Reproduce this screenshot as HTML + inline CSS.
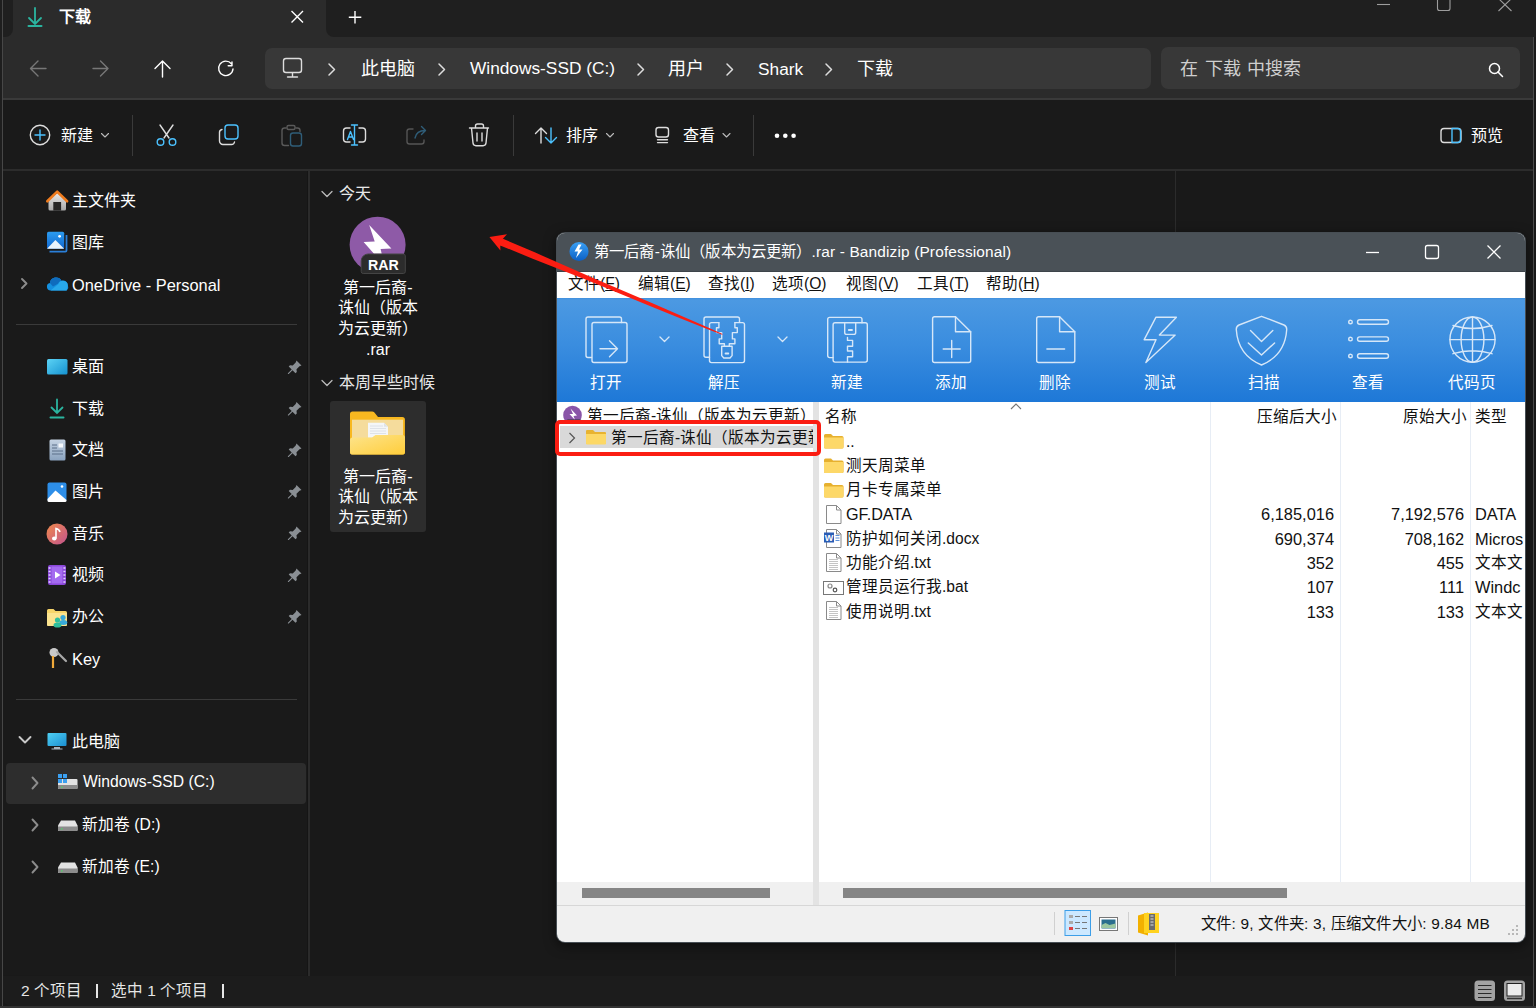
<!DOCTYPE html>
<html lang="zh-CN"><head><meta charset="utf-8">
<style>
*{box-sizing:border-box;margin:0;padding:0}
html,body{width:1536px;height:1008px;overflow:hidden;background:#191919;font-family:"Liberation Sans",sans-serif;color:#fff}
.a{position:absolute}
.t{position:absolute;white-space:nowrap;line-height:1}
svg{position:absolute;overflow:visible}
</style></head><body>
<!-- ===== EXPLORER ===== -->
<div class="a" style="left:0;top:0;width:2px;height:1008px;background:#1e1e1e"></div><div class="a" style="left:2px;top:0;width:1px;height:1008px;background:#474747"></div>
<div class="a" style="left:3px;top:0;width:1533px;height:37px;background:#1f1f1f"></div>

<!-- active tab -->
<div class="a" style="left:13px;top:-8px;width:313px;height:45px;background:#2b2b2b;border-radius:8px 8px 0 0"></div>
<div class="a" style="left:5px;top:29px;width:8px;height:8px;background:#2b2b2b"></div>
<div class="a" style="left:5px;top:29px;width:8px;height:8px;background:#1f1f1f;border-radius:0 0 8px 0"></div>
<div class="a" style="left:326px;top:29px;width:8px;height:8px;background:#2b2b2b"></div>
<div class="a" style="left:326px;top:29px;width:8px;height:8px;background:#1f1f1f;border-radius:0 0 0 8px"></div>
<!-- nav row -->
<div class="a" style="left:3px;top:37px;width:1530px;height:61px;background:#2b2b2b"></div>
<div class="a" style="left:3px;top:98px;width:1530px;height:2px;background:#3a3a3a"></div>
<div class="a" style="left:265px;top:48px;width:886px;height:41px;background:#383838;border-radius:7px"></div>
<div class="a" style="left:1161px;top:47px;width:359px;height:42px;background:#383838;border-radius:7px"></div>
<!-- command bar -->
<div class="a" style="left:3px;top:100px;width:1530px;height:69px;background:#1a1a1a"></div>
<div class="a" style="left:3px;top:169px;width:1530px;height:2px;background:#2c2c2c"></div>
<div class="a" style="left:132px;top:115px;width:1px;height:41px;background:#3a3a3a"></div>
<div class="a" style="left:513px;top:115px;width:1px;height:41px;background:#3a3a3a"></div>
<div class="a" style="left:753px;top:115px;width:1px;height:41px;background:#3a3a3a"></div>
<!-- panes -->
<div class="a" style="left:3px;top:171px;width:306px;height:804px;background:#1a1a1a"></div>
<div class="a" style="left:307px;top:171px;width:1px;height:805px;background:#151515"></div><div class="a" style="left:308px;top:171px;width:2px;height:805px;background:#2b2b2b"></div>
<div class="a" style="left:1175px;top:171px;width:1px;height:805px;background:#2b2b2b"></div>
<div class="a" style="left:3px;top:976px;width:1530px;height:30px;background:#1c1c1c;border-radius:0 0 0 8px"></div>
<div class="a" style="left:0;top:1006px;width:1536px;height:2px;background:#333"></div>

<!-- tab contents -->
<svg style="left:0;top:0" width="60" height="40"><g stroke="#2bb5a0" stroke-width="1.8" fill="none" stroke-linecap="round"><path d="M35 8v16M29 18l6 6 6-6"/><path d="M28.5 26h13" stroke-width="2"/></g></svg>
<div class="t" style="left:59px;top:9px;font-size:16px;font-weight:bold;color:#fff">下载</div>
<svg style="left:0;top:0" width="400" height="40"><g stroke="#fff" stroke-width="1.4" fill="none"><path d="M291.5 11l11.5 11.5M303 11l-11.5 11.5"/><path d="M355 11v12.5M348.8 17.2h12.5"/></g></svg>
<!-- window controls (cut) -->
<svg style="left:0;top:0" width="1536" height="20"><g stroke="#9d9d9d" stroke-width="1.1" fill="none"><path d="M1377 4.5h13"/><rect x="1437.5" y="-3" width="12.5" height="13.5" rx="2"/><path d="M1498.5 -1.5l13 12.5M1511.5 -1.5l-13 12.5"/></g></svg>

<!-- nav buttons -->
<svg style="left:0;top:0" width="260" height="100"><g fill="none" stroke-linecap="round" stroke-linejoin="round">
<path d="M46 68.5H31M38 61l-7.5 7.5L38 76" stroke="#777" stroke-width="1.4"/>
<path d="M93 68.5h15M100.5 61l7.5 7.5-7.5 7.5" stroke="#777" stroke-width="1.4"/>
<path d="M162.5 77V61M155 68.5l7.5-7.5 7.5 7.5" stroke="#fff" stroke-width="1.4"/>
<path d="M233 69a7.2 7.2 0 1 1-1.6-5.2M232 62v3.7h-3.8" stroke="#fff" stroke-width="1.4"/>
</g></svg>
<!-- address bar -->
<svg style="left:0;top:0" width="350" height="100"><g fill="none" stroke="#ddd" stroke-width="1.4" stroke-linecap="round" stroke-linejoin="round">
<rect x="283.5" y="58.5" width="18" height="14" rx="2.5"/><path d="M292.5 73v3M287.5 77h10"/>
</g></svg>
<svg style="left:0;top:0" width="900" height="100"><g fill="none" stroke="#ddd" stroke-width="1.5" stroke-linecap="round" stroke-linejoin="round">
<path d="M329 64l5.5 5.5-5.5 5.5"/><path d="M439 64l5.5 5.5-5.5 5.5"/><path d="M638 64l5.5 5.5-5.5 5.5"/><path d="M727 64l5.5 5.5-5.5 5.5"/><path d="M826 64l5.5 5.5-5.5 5.5"/>
</g></svg>
<div class="t" style="left:361px;top:60px;font-size:18px;color:#fff">此电脑</div>
<div class="t" style="left:470px;top:60px;font-size:17.3px;color:#fff">Windows-SSD (C:)</div>
<div class="t" style="left:668px;top:60px;font-size:18px;color:#fff">用户</div>
<div class="t" style="left:758px;top:61px;font-size:17.3px;color:#fff">Shark</div>
<div class="t" style="left:857px;top:60px;font-size:18px;color:#fff">下载</div>
<div class="t" style="left:1180px;top:60px;font-size:18px;word-spacing:1.5px;color:#cfcfcf">在 下载 中搜索</div>
<svg style="left:0;top:0" width="1536" height="100"><g fill="none" stroke="#fff" stroke-width="1.5" stroke-linecap="round"><circle cx="1494.5" cy="68.5" r="5"/><path d="M1498 72l4.5 4.5"/></g></svg>

<!-- command bar contents -->
<svg style="left:0;top:0" width="1536" height="170"><g fill="none" stroke-width="1.4" stroke-linecap="round" stroke-linejoin="round">
<circle cx="40" cy="135" r="9.7" stroke="#ddd"/><path d="M40 130v10M35 135h10" stroke="#4cc2ff"/>
<path d="M101.5 133.5l3.5 3.5 3.5-3.5" stroke="#bbb" stroke-width="1.1"/>
<!-- scissors -->
<path d="M160 125l9 13M173 125l-9 13" stroke="#ddd"/><circle cx="160.5" cy="142" r="3.3" stroke="#4cc2ff"/><circle cx="172.5" cy="142" r="3.3" stroke="#4cc2ff"/>
<!-- copy -->
<rect x="225" y="125" width="13" height="14" rx="3" stroke="#4cc2ff"/><path d="M222 129.5a3 3 0 0 0-2.5 3v8.5a3.5 3.5 0 0 0 3.5 3.5h8.5a3 3 0 0 0 3-2.5" stroke="#ddd"/>
<!-- paste (disabled) -->
<path d="M286 128h-1.5a2.5 2.5 0 0 0-2.5 2.5v12.5a2.5 2.5 0 0 0 2.5 2.5h4M296 128h1.5a2.5 2.5 0 0 1 2.5 2.5v1" stroke="#5a5a5a"/><rect x="287" y="125.5" width="8" height="4" rx="1.5" stroke="#5a5a5a"/><rect x="290.5" y="133" width="11" height="13" rx="2.5" stroke="#2f5d78"/>
<!-- rename -->
<path d="M350 128h-3.5a3 3 0 0 0-3 3v8a3 3 0 0 0 3 3h3.5M359 128h3.5a3 3 0 0 1 3 3v8a3 3 0 0 1-3 3H359" stroke="#ddd"/><path d="M354.5 125v20M351.5 125h6M351.5 145h6M347.5 139.5l3-8 3 8M348.5 137h4" stroke="#4cc2ff"/>
<!-- share disabled -->
<path d="M413 129h-3.5a2.5 2.5 0 0 0-2.5 2.5v10a2.5 2.5 0 0 0 2.5 2.5h12a2.5 2.5 0 0 0 2.5-2.5V140" stroke="#555"/><path d="M415 138c1-5 5-7.5 10-7.5M421.5 126.5l4 4-4 4" stroke="#2f5d78"/>
<!-- delete -->
<path d="M469.5 128h19M475.5 128v-2a2 2 0 0 1 2-2h4a2 2 0 0 1 2 2v2M471.5 128l1.5 15a3 3 0 0 0 3 2.7h7a3 3 0 0 0 3-2.7l1.5-15M477 133v8M482 133v8" stroke="#ddd"/>
<!-- sort -->
<path d="M541 143v-15M535.5 133.5l5.5-5.5 5.5 5.5" stroke="#ddd"/><path d="M551 128v15M545.5 137.5l5.5 5.5 5.5-5.5" stroke="#4cc2ff"/>
<path d="M606.5 133.5l3.5 3.5 3.5-3.5" stroke="#bbb" stroke-width="1.1"/>
<!-- view -->
<rect x="656" y="127.5" width="12.5" height="9.5" rx="2.5" stroke="#ddd"/><path d="M657.5 139.8h10M657.5 142.6h10" stroke="#ddd"/>
<path d="M723 133.5l3.5 3.5 3.5-3.5" stroke="#bbb" stroke-width="1.1"/>
<!-- preview -->
<rect x="1441" y="128.5" width="20" height="14" rx="3" stroke="#ddd"/><path d="M1452 128.5h5.5a3 3 0 0 1 3 3v8a3 3 0 0 1-3 3H1452z" stroke="#4cc2ff"/>
</g><g fill="#fff"><circle cx="777" cy="135.8" r="2.3"/><circle cx="785.3" cy="135.8" r="2.3"/><circle cx="793.6" cy="135.8" r="2.3"/></g></svg>
<div class="t" style="left:61px;top:128px;font-size:16px;color:#fff">新建</div>
<div class="t" style="left:566px;top:128px;font-size:16px;color:#fff">排序</div>
<div class="t" style="left:683px;top:128px;font-size:16px;color:#fff">查看</div>
<div class="t" style="left:1471px;top:128px;font-size:16px;color:#fff">预览</div>

<!-- ===== NAV PANE ===== -->
<!-- home -->
<svg style="left:46px;top:190px" width="24" height="24" viewBox="0 0 24 24">
<defs><linearGradient id="hg" x1="0" y1="0" x2="0" y2="1"><stop offset="0" stop-color="#e8e8e8"/><stop offset="1" stop-color="#a8a8a8"/></linearGradient></defs>
<path d="M2.5 10.5L11.2 3l8.8 7.5v8.5a1.6 1.6 0 0 1-1.6 1.6H4.1A1.6 1.6 0 0 1 2.5 19z" fill="url(#hg)"/>
<rect x="7.3" y="12" width="7.8" height="8.6" fill="#262626"/>
<path d="M1.3 11.3L11.2 1.6l9.9 9.7" fill="none" stroke="#f07c1e" stroke-width="2.6" stroke-linejoin="round" stroke-linecap="round"/>
</svg>
<div class="t" style="left:72px;top:193px;font-size:16px;color:#fff">主文件夹</div>
<!-- gallery -->
<svg style="left:46px;top:231px" width="24" height="24" viewBox="0 0 24 24">
<defs><linearGradient id="gg" x1="0" y1="0" x2="0" y2="1"><stop offset="0" stop-color="#2c9cf0"/><stop offset="1" stop-color="#1168d0"/></linearGradient></defs>
<path d="M20.5 4v15.5a1.2 1.2 0 0 1-1.2 1.2H3.5" fill="none" stroke="#2a7fd8" stroke-width="1.8"/>
<rect x="1" y="0.7" width="17.2" height="17.1" rx="1.5" fill="url(#gg)"/>
<path d="M1 17.8l8.4-8.8 8.8 8.8z" fill="#e9f3fb"/>
<circle cx="13.6" cy="5.3" r="1.4" fill="#fff"/>
</svg>
<div class="t" style="left:72px;top:235px;font-size:16px;color:#fff">图库</div>
<!-- onedrive -->
<svg style="left:0;top:270px" width="80" height="30"><path d="M22 9l4.5 4.5L22 18" fill="none" stroke="#8c8c8c" stroke-width="1.9" stroke-linecap="round" stroke-linejoin="round"/>
<path d="M50.5 20.4a3.8 3.8 0 0 1-.6-7.5 6.2 6.2 0 0 1 11.6-2.2 4.8 4.8 0 0 1 6.3 4.9 3.9 3.9 0 0 1-1.2 4.8z" fill="#1490df"/>
<path d="M49.9 12.9a6.2 6.2 0 0 1 11.6-2.2 5 5 0 0 0-3.6 3.1L53 16.5z" fill="#0f6cbd"/>
<path d="M50.5 20.4l8-6.4a4.8 4.8 0 0 1 9.3 1.7l-1.2 4.7z" fill="#28a8ea"/>
</svg>
<div class="t" style="left:72px;top:277px;font-size:16.4px;color:#fff">OneDrive - Personal</div>
<div class="a" style="left:16px;top:324px;width:281px;height:1px;background:#3a3a3a"></div>

<!-- quick access -->
<svg style="left:46px;top:358px" width="22" height="18" viewBox="0 0 22 18"><defs><linearGradient id="dg" x1="0" y1="0" x2="1" y2="1"><stop offset="0" stop-color="#5cd3f5"/><stop offset="1" stop-color="#1592d0"/></linearGradient></defs><rect x="1" y="1" width="20.5" height="15.5" rx="1.5" fill="url(#dg)"/></svg>
<div class="t" style="left:72px;top:359px;font-size:16px;color:#fff">桌面</div>
<svg style="left:46px;top:398px" width="22" height="22"><g stroke="#2bb5a0" stroke-width="1.8" fill="none" stroke-linecap="round"><path d="M11 1.5v13M5.5 9.5l5.5 5.5 5.5-5.5"/><path d="M4.5 19.5h13" stroke-width="2"/></g></svg>
<div class="t" style="left:72px;top:401px;font-size:16px;color:#fff">下载</div>
<svg style="left:46px;top:439px" width="22" height="22"><defs><linearGradient id="docg" x1="0" y1="0" x2="0" y2="1"><stop offset="0" stop-color="#c5d3e3"/><stop offset="1" stop-color="#8ba3bf"/></linearGradient></defs><rect x="3.5" y="0.5" width="16" height="21" rx="1.5" fill="url(#docg)"/><path d="M6 6h5M6 9h5M6 12h11M6 15h11" stroke="#5a6f88" stroke-width="1"/><rect x="12.5" y="4.5" width="4.5" height="4" fill="#f5f8fb"/></svg>
<div class="t" style="left:72px;top:442px;font-size:16px;color:#fff">文档</div>
<svg style="left:46px;top:481px" width="22" height="22"><rect x="1.5" y="1.5" width="19" height="19" rx="2" fill="#2d8ee8"/><path d="M1.5 18l8-8.5 11 9.5v0.5a1.5 1.5 0 0 1-1.5 1.5H3A1.5 1.5 0 0 1 1.5 19.5z" fill="#fff"/><circle cx="16" cy="5.5" r="1.3" fill="#fff"/></svg>
<div class="t" style="left:72px;top:484px;font-size:16px;color:#fff">图片</div>
<svg style="left:46px;top:523px" width="22" height="22"><defs><linearGradient id="mg" x1="0" y1="0" x2="1" y2="1"><stop offset="0" stop-color="#f08a4b"/><stop offset="1" stop-color="#c2538f"/></linearGradient></defs><circle cx="11" cy="11" r="10.5" fill="url(#mg)"/><path d="M10 15.5V5.5c2 .5 3.5 1.8 4 3.5" fill="none" stroke="#fff" stroke-width="1.6"/><ellipse cx="8.3" cy="15.5" rx="2.3" ry="2" fill="#fff"/></svg>
<div class="t" style="left:72px;top:526px;font-size:16px;color:#fff">音乐</div>
<svg style="left:46px;top:564px" width="22" height="22"><rect x="2" y="1" width="18" height="20" rx="2" fill="#8a47d9"/><rect x="5.5" y="2.5" width="11" height="17" fill="#a46af0"/><path d="M2.6 4h2M2.6 7.5h2M2.6 11h2M2.6 14.5h2M2.6 18h2M17.4 4h2M17.4 7.5h2M17.4 11h2M17.4 14.5h2M17.4 18h2" stroke="#e3d4ff" stroke-width="1.5"/><path d="M9 7.5v7l5.5-3.5z" fill="#fff"/></svg>
<div class="t" style="left:72px;top:567px;font-size:16px;color:#fff">视频</div>
<svg style="left:46px;top:606px" width="22" height="22"><path d="M1 4.5a1.5 1.5 0 0 1 1.5-1.5h5l2 2h10A1.5 1.5 0 0 1 21 6.5v12A1.5 1.5 0 0 1 19.5 20h-17A1.5 1.5 0 0 1 1 18.5z" fill="#f7d56a"/><path d="M1 7h20v11.5a1.5 1.5 0 0 1-1.5 1.5h-17A1.5 1.5 0 0 1 1 18.5z" fill="#fbe38f"/><circle cx="17" cy="11.5" r="2.6" fill="#38a9d9"/><ellipse cx="17.3" cy="16.5" rx="4" ry="2.5" fill="#38a9d9"/><circle cx="11.5" cy="14" r="2.6" fill="#2fbf9c"/><ellipse cx="11.5" cy="19" rx="4" ry="2.6" fill="#2fbf9c"/></svg>
<div class="t" style="left:72px;top:609px;font-size:16px;color:#fff">办公</div>
<svg style="left:46px;top:647px" width="22" height="22"><circle cx="8" cy="5.5" r="4.5" fill="#c9c9c9"/><path d="M7 9v12" stroke="#f0a93a" stroke-width="2.2"/><path d="M11 5l9 9" stroke="#a9a9a9" stroke-width="2.2" stroke-linecap="round"/></svg>
<div class="t" style="left:72px;top:651px;font-size:16.4px;color:#fff">Key</div>
<!-- pins -->
<svg style="left:0;top:0" width="310" height="700"><g fill="#8a8f94">
<path id="pin" d="M296.5 360.5l5 5-2 .8-3 3 .3 2.7-1.3 1.3-3-3-3.8 3.8h-.8v-.8l3.8-3.8-3-3 1.3-1.3 2.7.3 3-3z"/>
<use href="#pin" y="41.5"/><use href="#pin" y="83"/><use href="#pin" y="124.5"/><use href="#pin" y="166"/><use href="#pin" y="208"/><use href="#pin" y="249.5"/>
</g></svg>
<div class="a" style="left:16px;top:699px;width:281px;height:1px;background:#3a3a3a"></div>

<!-- this pc -->
<svg style="left:0;top:725px" width="80" height="30"><path d="M19.5 12l5.5 5.5 5.5-5.5" fill="none" stroke="#c8c8c8" stroke-width="1.9" stroke-linecap="round" stroke-linejoin="round"/>
<defs><linearGradient id="pcg" x1="0" y1="0" x2="1" y2="1"><stop offset="0" stop-color="#4fd0f3"/><stop offset="1" stop-color="#1b8fd1"/></linearGradient></defs>
<rect x="47.5" y="8" width="19" height="13" rx="1" fill="url(#pcg)"/><path d="M54 22h6v1.5h2.5v1h-11v-1H54z" fill="#a8b4bd"/></svg>
<div class="t" style="left:72px;top:734px;font-size:16px;color:#fff">此电脑</div>
<div class="a" style="left:6px;top:763px;width:300px;height:41px;background:#2d2d2d;border-radius:4px"></div>
<svg style="left:0;top:765px" width="90" height="36"><path d="M32.5 12.5l5 5.5-5 5.5" fill="none" stroke="#8c8c8c" stroke-width="1.9" stroke-linecap="round" stroke-linejoin="round"/>
<path d="M59 14h17.5a1 1 0 0 1 1 1v8a1 1 0 0 1-1 1h-17.5a1 1 0 0 1-1-1v-8a1 1 0 0 1 1-1z" fill="#e3e3e3"/><path d="M58 20h19.5v3a1 1 0 0 1-1 1H59a1 1 0 0 1-1-1z" fill="#8c8c8c"/><rect x="61" y="21.5" width="1.5" height="1.3" fill="#4cd964"/>
<rect x="58" y="9" width="4" height="4" fill="#3a9ff0"/><rect x="63" y="9" width="4" height="4" fill="#3a9ff0"/><rect x="58" y="14" width="4" height="4" fill="#3a9ff0"/><rect x="63" y="14" width="4" height="4" fill="#3a9ff0"/>
</svg>
<div class="t" style="left:83px;top:774px;font-size:15.7px;color:#fff">Windows-SSD (C:)</div>
<svg style="left:0;top:807px" width="90" height="36"><path d="M32.5 12.5l5 5.5-5 5.5" fill="none" stroke="#8c8c8c" stroke-width="1.9" stroke-linecap="round" stroke-linejoin="round"/>
<path d="M61 13.5h14l2.5 5v4.5a1 1 0 0 1-1 1h-17.5a1 1 0 0 1-1-1v-4.5z" fill="#e3e3e3"/><path d="M58 19.5h19.5v3.5a1 1 0 0 1-1 1H59a1 1 0 0 1-1-1z" fill="#8c8c8c"/><rect x="61" y="21.3" width="1.5" height="1.3" fill="#4cd964"/></svg>
<div class="t" style="left:82px;top:817px;font-size:15.7px;color:#fff">新加卷 (D:)</div>
<svg style="left:0;top:849px" width="90" height="36"><path d="M32.5 12.5l5 5.5-5 5.5" fill="none" stroke="#8c8c8c" stroke-width="1.9" stroke-linecap="round" stroke-linejoin="round"/>
<path d="M61 13.5h14l2.5 5v4.5a1 1 0 0 1-1 1h-17.5a1 1 0 0 1-1-1v-4.5z" fill="#e3e3e3"/><path d="M58 19.5h19.5v3.5a1 1 0 0 1-1 1H59a1 1 0 0 1-1-1z" fill="#8c8c8c"/><rect x="61" y="21.3" width="1.5" height="1.3" fill="#4cd964"/></svg>
<div class="t" style="left:82px;top:859px;font-size:15.7px;color:#fff">新加卷 (E:)</div>

<!-- status bar -->
<div class="t" style="left:21px;top:983px;font-size:15.5px;color:#e6e6e6">2 个项目</div>
<div class="a" style="left:96px;top:984px;width:2px;height:14px;background:#e6e6e6"></div>
<div class="t" style="left:111px;top:983px;font-size:15.5px;color:#e6e6e6">选中 1 个项目</div>
<div class="a" style="left:222px;top:984px;width:2px;height:14px;background:#e6e6e6"></div>
<svg style="left:0;top:970px" width="1536" height="38">
<rect x="1474.5" y="10.5" width="20.5" height="20.5" rx="3.5" fill="#a3a3a3"/><path d="M1478 15.5h13.5M1478 19.5h13.5M1478 23.5h13.5M1478 27.5h13.5" stroke="#2a2a2a" stroke-width="1.2"/>
<rect x="1504" y="10.5" width="21" height="20.5" rx="3.5" fill="#a3a3a3"/><rect x="1507" y="13.5" width="15" height="12.5" fill="#ececec" stroke="#222" stroke-width="1"/><path d="M1507 28.5h15" stroke="#333" stroke-width="1.5"/>
</svg>
<div class="a" style="left:1533px;top:37px;width:1px;height:969px;background:#4a4a4a"></div>

<!-- ===== CONTENT ===== -->
<svg style="left:0;top:180px" width="340" height="220"><g fill="none" stroke="#bbb" stroke-width="1.3" stroke-linecap="round" stroke-linejoin="round"><path d="M322 191.5l5 5 5-5" transform="translate(0,-180)"/><path d="M322 380.5l5 5 5-5" transform="translate(0,-180)"/></g></svg>
<div class="t" style="left:339px;top:186px;font-size:16px;color:#e8e8e8">今天</div>
<div class="t" style="left:339px;top:375px;font-size:16px;color:#e8e8e8">本周早些时候</div>
<!-- rar icon -->
<svg style="left:345px;top:214px" width="66" height="62" viewBox="0 0 66 62">
<circle cx="32.6" cy="30.7" r="28" fill="#8e5aa7"/>
<path d="M24.2 10.9L46.4 34.5 35.6 35 36.7 39.75 29 39.75 18.6 28.1 29.7 27.6z" fill="#fff"/>
<path d="M16.2 47a7 7 0 0 1 7-7h35.1a2 2 0 0 1 2 2v15.5a2 2 0 0 1-2 2H18.2a2 2 0 0 1-2-2z" fill="#2c2c2c" stroke="#444" stroke-width="1"/>
<text x="38.3" y="55.6" font-family="Liberation Sans" font-weight="bold" font-size="14.2" fill="#fff" text-anchor="middle">RAR</text>
</svg>
<div class="t" style="left:338px;top:277.5px;width:80px;text-align:center;font-size:16px;line-height:20.7px;color:#fff;white-space:normal">第一后裔-<br>诛仙（版本<br>为云更新）<br>.rar</div>
<!-- selected folder tile -->
<div class="a" style="left:330px;top:401px;width:96px;height:131px;background:#2d2d2d;border-radius:3px"></div>
<svg style="left:345px;top:405px" width="66" height="55" viewBox="0 0 66 55">
<defs><linearGradient id="ffr" x1="0" y1="0" x2="1" y2="1"><stop offset="0" stop-color="#fde48c"/><stop offset="1" stop-color="#ffcd3a"/></linearGradient></defs>
<path d="M5 9a2.6 2.6 0 0 1 2.6-2.6h19.5a3 3 0 0 1 2.3 1.1L33 12h24.3a2.6 2.6 0 0 1 2.6 2.6v32.2a2.6 2.6 0 0 1-2.6 2.6H7.6A2.6 2.6 0 0 1 5 46.8z" fill="#f8b820"/>
<rect x="7" y="14.7" width="51" height="19" fill="#f5dc9c"/>
<path d="M23 17.8h16l4 4v11H23z" fill="#f4f6f8"/><path d="M39 17.8v4h4" fill="#dfe3e8"/>
<path d="M25 21h13M25 23.5h16M25 26h16M25 28.5h16" stroke="#d8dde3" stroke-width="0.8"/>
<path d="M5 35a2.5 2.5 0 0 1 2.5-2.5H27l3.5-2.5h27a2.5 2.5 0 0 1 2.5 2.5v14.4a2.6 2.6 0 0 1-2.6 2.6H7.6A2.6 2.6 0 0 1 5 46.9z" fill="url(#ffr)"/>
</svg>
<div class="t" style="left:338px;top:466.5px;width:80px;text-align:center;font-size:16px;line-height:20.7px;color:#fff;white-space:normal">第一后裔-<br>诛仙（版本<br>为云更新）</div>

<!-- ===== BANDIZIP ===== -->
<div class="a" style="left:556px;top:232px;width:970px;height:711px;background:#474e54;border-radius:9px;box-shadow:0 3px 12px rgba(0,0,0,.5)"></div>
<div class="a" style="left:557px;top:233px;width:968px;height:709px;background:#f0f0f0;border-radius:8px;overflow:hidden">
  <div class="a" style="left:0;top:0;width:968px;height:38.5px;background:#4a5157;border-bottom:1.5px solid #3d444a"></div>
  <div class="a" style="left:0;top:38.5px;width:968px;height:26px;background:#fff"></div>
  <div class="a" style="left:0;top:64.5px;width:968px;height:104px;background:linear-gradient(180deg,#3f8fdd 0,#4c99e2 2px,#3a8ddf 45%,#1e78d7 100%)"></div>
  <div class="a" style="left:0;top:168.5px;width:256px;height:480.5px;background:#fff"></div>
  <div class="a" style="left:256px;top:168.5px;width:6px;height:503.5px;background:#e3e3e3"></div>
  <div class="a" style="left:262px;top:168.5px;width:706px;height:480.5px;background:#fff"></div>
  <div class="a" style="left:0;top:672px;width:968px;height:1px;background:#d7d7d7"></div>
</div>
<!-- title -->
<svg style="left:566px;top:239px" width="26" height="26" viewBox="0 0 26 26"><defs><linearGradient id="bzg" x1="0" y1="0" x2="0" y2="1"><stop offset="0" stop-color="#3aa0f5"/><stop offset="1" stop-color="#0b5fc4"/></linearGradient></defs><circle cx="13" cy="12.5" r="9.5" fill="url(#bzg)"/><path d="M12.5 5.5l-4 7h3.5l-2 6.5 6.5-8.5h-3.5l2.5-5z" fill="#fff"/></svg>
<div class="t" style="left:594px;top:243.5px;font-size:15.4px;letter-spacing:0.16px;color:#fff">第一后裔-诛仙（版本为云更新）.rar - Bandizip (Professional)</div>
<svg style="left:0;top:0" width="1536" height="300"><g stroke="#fff" stroke-width="1.3" fill="none"><path d="M1366 252.5h13"/><rect x="1425.5" y="245.5" width="13" height="13" rx="2"/><path d="M1487.5 245.5l13 13M1500.5 245.5l-13 13"/></g></svg>
<!-- menu -->
<div class="t" style="left:568px;top:276px;font-size:15.6px;color:#111">文件(<u>F</u>)</div>
<div class="t" style="left:638px;top:276px;font-size:15.6px;color:#111">编辑(<u>E</u>)</div>
<div class="t" style="left:708px;top:276px;font-size:15.6px;color:#111">查找(<u>I</u>)</div>
<div class="t" style="left:772px;top:276px;font-size:15.6px;color:#111">选项(<u>O</u>)</div>
<div class="t" style="left:846px;top:276px;font-size:15.6px;color:#111">视图(<u>V</u>)</div>
<div class="t" style="left:917px;top:276px;font-size:15.6px;color:#111">工具(<u>T</u>)</div>
<div class="t" style="left:986px;top:276px;font-size:15.6px;color:#111">帮助(<u>H</u>)</div>
<!-- toolbar icons -->
<svg style="left:0;top:0" width="1536" height="410"><g fill="none" stroke="#d6e7f8" stroke-width="1.4" stroke-linejoin="round" stroke-linecap="round">
<!-- open -->
<path d="M591.5 357.5H588a2 2 0 0 1-2-2V319a2 2 0 0 1 2-2h31.5a2 2 0 0 1 2 2v3.5"/>
<rect x="592" y="322.5" width="35" height="40" rx="2"/>
<path d="M600 348.7h17.5M609.5 340.7l8 8-8 8"/>
<path d="M660 337l4.5 4.5 4.5-4.5M778 337l4.5 4.5 4.5-4.5" stroke-width="1.3"/>
<!-- extract -->
<path d="M709.5 357.3H706a2 2 0 0 1-2-2V319a2 2 0 0 1 2-2h31.5a2 2 0 0 1 2 2v3"/>
<path d="M718.9 322.6h-7.4a2 2 0 0 0-2 2v36a2 2 0 0 0 2 2h31a2 2 0 0 0 2-2v-36a2 2 0 0 0-2-2h-7.6"/>
<path d="M718.9 322.6v5.2h-2.4v4.8h5.2v6.3h-2.5v4.85h5.2v2.45M734.9 322.6v5.2h2.4v4.8h-4.9v6.3h2.5v4.85h-5.6v2.45"/>
<path d="M721.7 346.2h10.4v9.4l-2.1 2.4h-6.2l-2.1-2.4z"/><path d="M725.5 353.5h2.8" stroke-width="1.8"/>
<!-- new -->
<path d="M833 357.6h-3.3a2 2 0 0 1-2-2V319.4a2 2 0 0 1 2-2H860a2 2 0 0 1 2 2v3.4"/>
<rect x="833.1" y="322.8" width="34.2" height="39.3" rx="2"/>
<path d="M844.7 322.8v9.6a2 2 0 0 0 2 2h7a2 2 0 0 0 2-2v-9.6"/><path d="M848.8 330h3.2" stroke-width="1.8"/>
<path d="M847.5 337.4v3h5.1v5.9h-5.1v4.7h5.1v5.7h-5.1v5.4"/>
<!-- add -->
<path d="M934.6 316.8h20.9l15.2 14.9v28.8a2 2 0 0 1-2 2h-34.1a2 2 0 0 1-2-2v-41.7a2 2 0 0 1 2-2z"/><path d="M955.5 316.8v14.9h15.2"/>
<path d="M951.7 340.5v17M943.2 349h17"/>
<!-- delete -->
<path d="M1038.7 316.8h20.9l15.2 14.9v28.8a2 2 0 0 1-2 2h-34.1a2 2 0 0 1-2-2v-41.7a2 2 0 0 1 2-2z"/><path d="M1059.6 316.8v14.9h15.2"/>
<path d="M1046.9 349h17.7"/>
<!-- test lightning -->
<path d="M1156 317.2h20.4l-17 17.9h15.8l-29.3 27.4 10.1-22.8h-11.8z"/>
<!-- scan shield -->
<path d="M1261.5 316.3L1239 325q-3 1.3-2.7 4.8q1.7 25.5 25.2 35.2q23.5-9.7 25.2-35.2q.3-3.5-2.7-4.8z"/>
<path d="M1250.5 330.5l11 11 11.3-11M1248.3 342.9l13.2 12.2 13.1-12.2"/>
<!-- view list -->
<circle cx="1350.5" cy="322" r="1.8"/><circle cx="1350.5" cy="339.1" r="1.8"/><circle cx="1350.5" cy="356" r="1.8"/>
<rect x="1357.5" y="319.8" width="31" height="4.4" rx="2.2"/><rect x="1357.5" y="336.9" width="31" height="4.4" rx="2.2"/><rect x="1357.5" y="353.8" width="31" height="4.4" rx="2.2"/>
<!-- globe -->
<circle cx="1472.5" cy="339.6" r="22.6"/><ellipse cx="1472.5" cy="339.6" rx="11.4" ry="22.6"/><path d="M1472.5 317v45.2M1450 339.6h45M1453 325.5q19.5 6 39 0M1453 353.7q19.5 -6 39 0"/>
</g></svg>
<div class="t" style="left:590px;top:375px;font-size:15.6px;color:#fff">打开</div>
<div class="t" style="left:708px;top:375px;font-size:15.6px;color:#fff">解压</div>
<div class="t" style="left:831px;top:375px;font-size:15.6px;color:#fff">新建</div>
<div class="t" style="left:935px;top:375px;font-size:15.6px;color:#fff">添加</div>
<div class="t" style="left:1039px;top:375px;font-size:15.6px;color:#fff">删除</div>
<div class="t" style="left:1144px;top:375px;font-size:15.6px;color:#fff">测试</div>
<div class="t" style="left:1248px;top:375px;font-size:15.6px;color:#fff">扫描</div>
<div class="t" style="left:1352px;top:375px;font-size:15.6px;color:#fff">查看</div>
<div class="t" style="left:1448px;top:375px;font-size:15.6px;color:#fff">代码页</div>

<!-- tree pane -->
<div class="a" style="left:557px;top:401px;width:256px;height:19px;overflow:hidden">
<svg style="left:6px;top:3.5px" width="24" height="22" viewBox="0 0 24 22"><circle cx="9.5" cy="10" r="9.3" fill="#8a55a8"/><path d="M7.5 3.5l6.5 7-3.5.5 1.5 4-5.5-6h3.5z" fill="#fff"/><rect x="3" y="14.5" width="16" height="8" rx="2" fill="#333"/></svg>
<div class="t" style="left:30px;top:7px;font-size:15.6px;color:#111">第一后裔-诛仙（版本为云更新）</div>
</div>
<div class="a" style="left:560px;top:426px;width:253px;height:22px;background:#d9d9d9"></div>
<svg style="left:0;top:0" width="820" height="460"><path d="M569.5 433l5 5-5 5" fill="none" stroke="#555" stroke-width="1.2"/>
<path d="M586 431a1 1 0 0 1 1-1h6l2 2h10a1 1 0 0 1 1 1v10a1 1 0 0 1-1 1H587a1 1 0 0 1-1-1z" fill="#e8b330"/><path d="M586 434h20v9.5a1 1 0 0 1-1 1H587a1 1 0 0 1-1-1z" fill="#fcd866"/></svg>
<div style="position:absolute;left:560px;top:425px;width:253px;height:25px;overflow:hidden"><div class="t" style="left:51px;top:5px;font-size:15.6px;color:#111">第一后裔-诛仙（版本为云更新）</div></div>

<!-- list header -->
<div class="t" style="left:825px;top:409px;font-size:15.6px;color:#111">名称</div>
<svg style="left:0;top:0" width="1536" height="900"><path d="M1011 409l5-5 5 5" fill="none" stroke="#777" stroke-width="1.1"/>
<g stroke="#e7edf5" stroke-width="1"><path d="M1210.5 402v480M1340.5 402v480M1470.5 402v480"/></g></svg>
<div class="t" style="left:1257px;top:409px;font-size:15.6px;color:#111">压缩后大小</div>
<div class="t" style="left:1403px;top:409px;font-size:15.6px;color:#111">原始大小</div>
<div class="t" style="left:1475px;top:409px;font-size:15.6px;color:#111">类型</div>

<!-- list rows -->
<svg style="left:0;top:0" width="1536" height="1008">
<defs>
<g id="fold"><path d="M0 1.5A1.5 1.5 0 0 1 1.5 0h5.5l2 2h9A1.5 1.5 0 0 1 19.5 3.5V13a1.5 1.5 0 0 1-1.5 1.5H1.5A1.5 1.5 0 0 1 0 13z" fill="#e6b02e"/><path d="M0 3.5h19.5V13a1.5 1.5 0 0 1-1.5 1.5H1.5A1.5 1.5 0 0 1 0 13z" fill="#fdd868"/></g>
<g id="file"><path d="M0.5 0.5h10l4.5 4.5v13.5H0.5z" fill="#fff" stroke="#8a8a8a" stroke-width="1"/><path d="M10.5 0.5v4.5h4.5" fill="none" stroke="#8a8a8a" stroke-width="1"/></g>
<g id="txt"><use href="#file"/><path d="M3 6.5h9M3 8.5h9M3 10.5h9M3 12.5h9M3 14.5h9M3 16.5h9" stroke="#c4c4c4" stroke-width="1"/></g>
</defs>
<use href="#fold" x="824" y="434"/>
<use href="#fold" x="824" y="458.5"/>
<use href="#fold" x="824" y="483"/>
<use href="#file" x="826" y="505"/>
<use href="#file" x="826" y="529"/><rect x="824" y="532.5" width="10" height="10" fill="#2a5db5"/><text x="829" y="541" font-family="Liberation Sans" font-size="9" font-weight="bold" fill="#fff" text-anchor="middle">W</text><path d="M835.5 535.5h4M835.5 538h4M835.5 540.5h4" stroke="#5b8fd8" stroke-width="1"/>
<use href="#txt" x="826" y="553"/>
<rect x="823.5" y="581.5" width="20" height="13" fill="#fff" stroke="#777" stroke-width="1"/><circle cx="830" cy="586" r="2" fill="none" stroke="#888" stroke-width="1.2"/><circle cx="835" cy="590" r="1.8" fill="none" stroke="#555" stroke-width="1.2"/>
<use href="#txt" x="826" y="601"/>
</svg>
<div class="t" style="left:846px;top:434px;font-size:15.6px;color:#111">..</div>
<div class="t" style="left:846px;top:458px;font-size:15.6px;color:#111">测天周菜单</div>
<div class="t" style="left:846px;top:482px;font-size:15.6px;color:#111">月卡专属菜单</div>
<div class="t" style="left:846px;top:506px;font-size:16.2px;color:#111">GF.DATA</div>
<div class="t" style="left:846px;top:531px;font-size:15.6px;color:#111">防护如何关闭.docx</div>
<div class="t" style="left:846px;top:555px;font-size:15.6px;color:#111">功能介绍.txt</div>
<div class="t" style="left:846px;top:579px;font-size:15.6px;color:#111">管理员运行我.bat</div>
<div class="t" style="left:846px;top:604px;font-size:15.6px;color:#111">使用说明.txt</div>
<div class="a" style="left:1200px;top:506px;width:134px;font-size:16.4px;line-height:1;text-align:right;color:#111">6,185,016</div>
<div class="a" style="left:1200px;top:531px;width:134px;font-size:16.4px;line-height:1;text-align:right;color:#111">690,374</div>
<div class="a" style="left:1200px;top:555px;width:134px;font-size:16.4px;line-height:1;text-align:right;color:#111">352</div>
<div class="a" style="left:1200px;top:579px;width:134px;font-size:16.4px;line-height:1;text-align:right;color:#111">107</div>
<div class="a" style="left:1200px;top:604px;width:134px;font-size:16.4px;line-height:1;text-align:right;color:#111">133</div>
<div class="a" style="left:1330px;top:506px;width:134px;font-size:16.4px;line-height:1;text-align:right;color:#111">7,192,576</div>
<div class="a" style="left:1330px;top:531px;width:134px;font-size:16.4px;line-height:1;text-align:right;color:#111">708,162</div>
<div class="a" style="left:1330px;top:555px;width:134px;font-size:16.4px;line-height:1;text-align:right;color:#111">455</div>
<div class="a" style="left:1330px;top:579px;width:134px;font-size:16.4px;line-height:1;text-align:right;color:#111">111</div>
<div class="a" style="left:1330px;top:604px;width:134px;font-size:16.4px;line-height:1;text-align:right;color:#111">133</div>
<div class="a" style="left:1474px;top:500px;width:50px;height:130px;overflow:hidden">
<div class="t" style="left:1px;top:6px;font-size:16.4px;color:#111">DATA</div>
<div class="t" style="left:1px;top:31px;font-size:16.4px;color:#111">Micros</div>
<div class="t" style="left:1px;top:55px;font-size:15.6px;color:#111">文本文</div>
<div class="t" style="left:1px;top:79px;font-size:16.4px;color:#111">Windc</div>
<div class="t" style="left:1px;top:104px;font-size:15.6px;color:#111">文本文</div>
</div>
<!-- scrollbars -->
<div class="a" style="left:557px;top:882px;width:256px;height:23px;background:#f0f0f0"></div>
<div class="a" style="left:819px;top:882px;width:706px;height:23px;background:#f0f0f0"></div>
<div class="a" style="left:582px;top:888px;width:188px;height:10px;background:#858585"></div>
<div class="a" style="left:843px;top:888px;width:444px;height:10px;background:#858585"></div>
<!-- status -->
<svg style="left:0;top:0" width="1536" height="1008">
<path d="M1054.5 912v23M1128.5 912v23" stroke="#d0d0d0" stroke-width="1"/>
<rect x="1065" y="910.5" width="25.5" height="25" fill="#cce8ff" stroke="#3c9ee8" stroke-width="1"/>
<g fill="#aaa"><rect x="1069" y="915" width="4" height="3"/><rect x="1069" y="921" width="4" height="3"/></g><rect x="1069" y="927" width="4" height="3" fill="#d44"/>
<path d="M1075 916.5h5M1082 916.5h5M1075 922.5h5M1082 922.5h5M1075 928.5h5M1082 928.5h5" stroke="#777" stroke-width="1.2"/>
<rect x="1099.5" y="917.5" width="18" height="13" fill="#fff" stroke="#777" stroke-width="1"/><rect x="1101.5" y="919.5" width="14" height="9" fill="#2a6e8e"/><path d="M1101.5 925l4-2 4 2 6-1.5v4.5h-14z" fill="#9bc7a0"/>
<path d="M1138 915.5l10-3v23l-10-3z" fill="#f2b000"/><rect x="1144" y="913" width="15" height="20" fill="#ffd21f"/><rect x="1149" y="914" width="6" height="16" fill="#6b6b6b"/><path d="M1150.5 916h3M1150.5 919h3M1150.5 922h3M1150.5 925h3" stroke="#ddd" stroke-width="1"/>
<g fill="#b8b8b8"><rect x="1516" y="925" width="2" height="2"/><rect x="1512" y="929" width="2" height="2"/><rect x="1516" y="929" width="2" height="2"/><rect x="1508" y="933" width="2" height="2"/><rect x="1512" y="933" width="2" height="2"/><rect x="1516" y="933" width="2" height="2"/></g>
</svg>
<div class="t" style="left:1201px;top:916px;font-size:15.4px;letter-spacing:0.23px;color:#111">文件: 9, 文件夹: 3, 压缩文件大小: 9.84 MB</div>

<!-- ===== ANNOTATIONS ===== -->
<div class="a" style="left:554.5px;top:420px;width:266.5px;height:35.6px;border:4px solid #fb1d12;border-radius:5px"></div>
<svg style="left:0;top:0" width="1536" height="1008"><path d="M503.0 238.8 L535.3 252.6 L590.8 277.1 L650.7 302.6 L680.5 315.4 L710.3 328.6 L722.5 334.1 L722.3 334.7 L709.7 329.9 L679.5 317.9 L649.3 305.7 L589.2 281.0 L532.7 258.7 L500.2 245.4z" fill="#fb1d12"/><path d="M489.4 237.1 L507.0 234.2 L502.9 238.7 L503.5 246 L500.25 245.5 L500.4 250.6z" fill="#fb1d12"/></svg>

</body></html>
